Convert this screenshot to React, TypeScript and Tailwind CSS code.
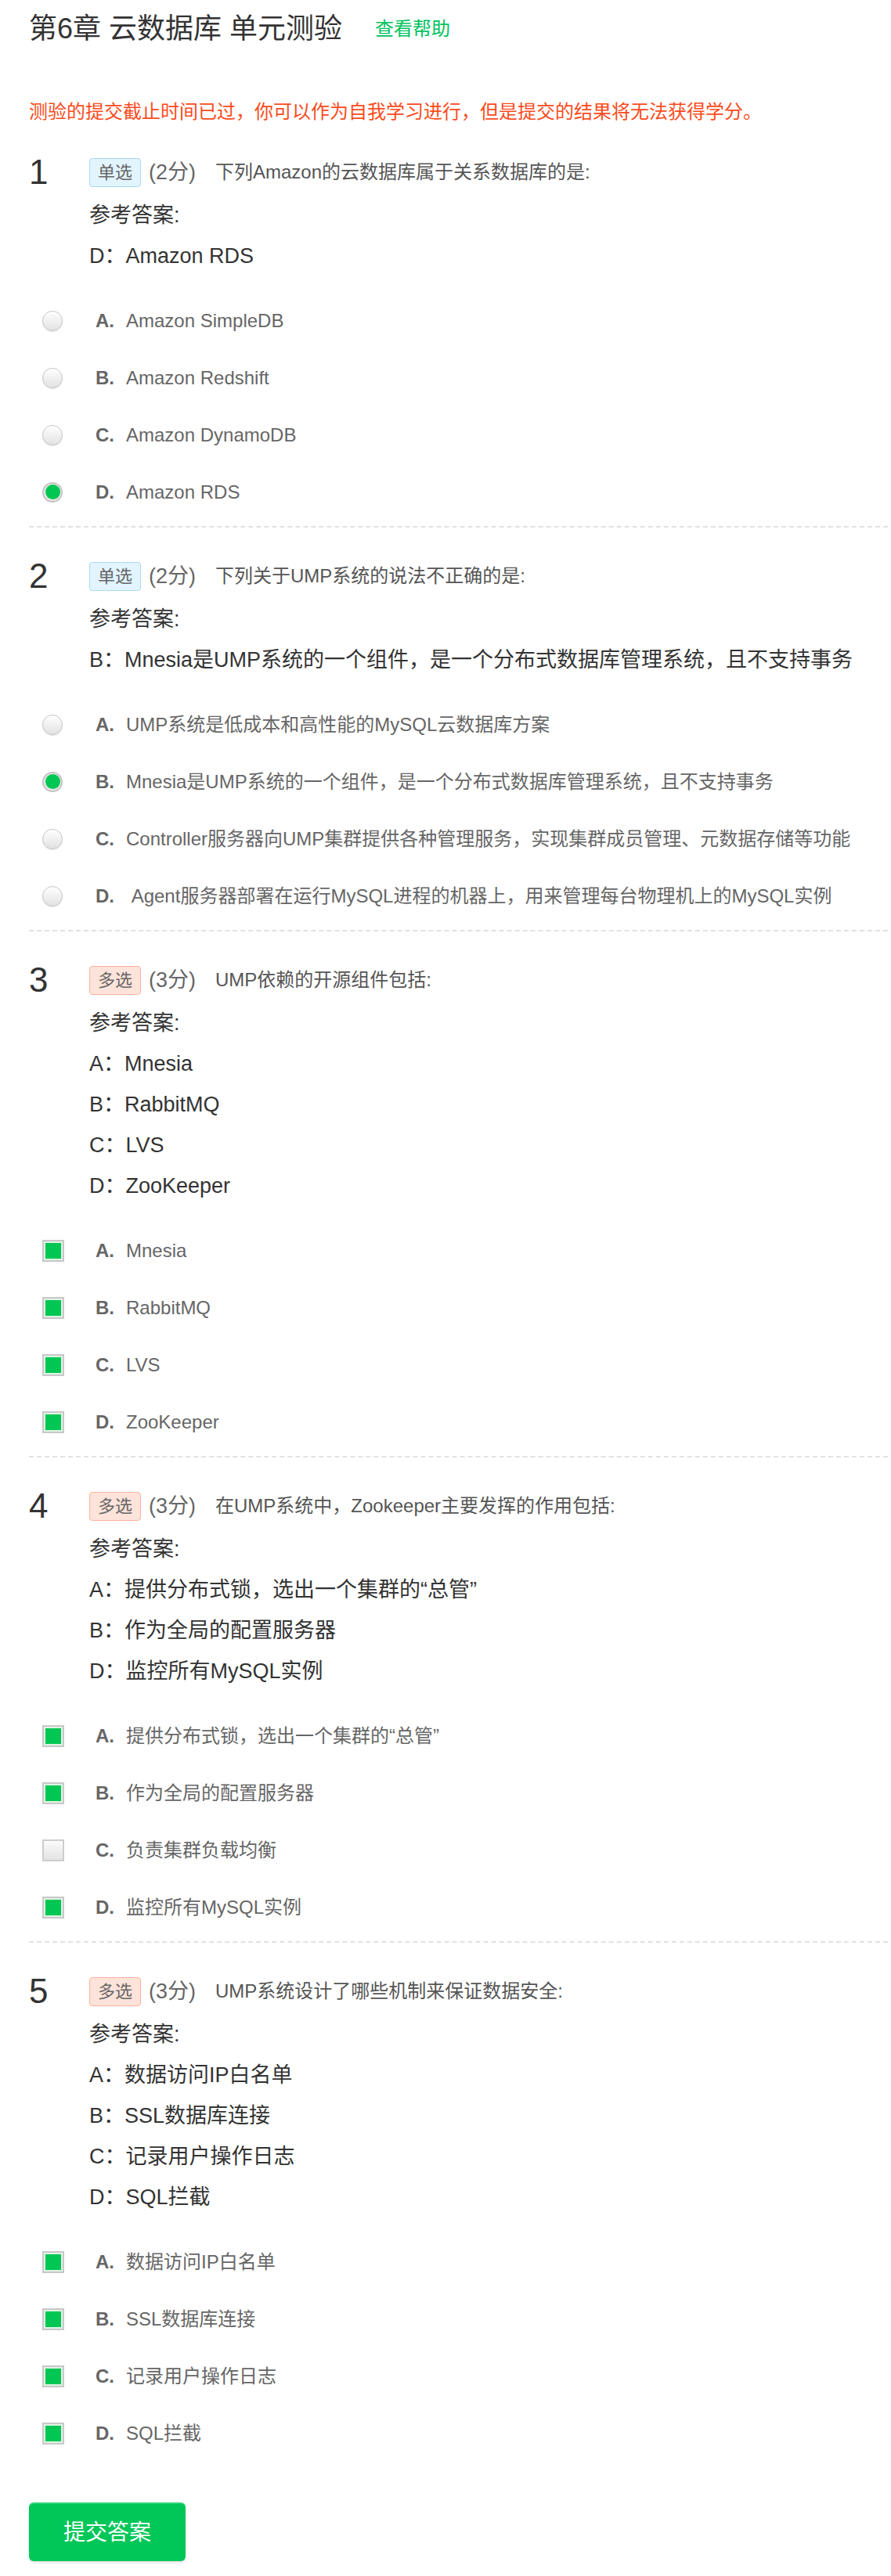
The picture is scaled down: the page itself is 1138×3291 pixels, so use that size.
import React from "react";

type Opt = { key: string; text: string; checked: boolean };
type Question = {
  no: number;
  kind: "单选" | "多选";
  score: string;
  title: string;
  answers: string[];
  options: Opt[];
};

const questions: Question[] = [
  {
    no: 1,
    kind: "单选",
    score: "(2分)",
    title: "下列Amazon的云数据库属于关系数据库的是:",
    answers: ["D：Amazon RDS"],
    options: [
      { key: "A", text: "Amazon SimpleDB", checked: false },
      { key: "B", text: "Amazon Redshift", checked: false },
      { key: "C", text: "Amazon DynamoDB", checked: false },
      { key: "D", text: "Amazon RDS", checked: true },
    ],
  },
  {
    no: 2,
    kind: "单选",
    score: "(2分)",
    title: "下列关于UMP系统的说法不正确的是:",
    answers: ["B：Mnesia是UMP系统的一个组件，是一个分布式数据库管理系统，且不支持事务"],
    options: [
      { key: "A", text: "UMP系统是低成本和高性能的MySQL云数据库方案", checked: false },
      { key: "B", text: "Mnesia是UMP系统的一个组件，是一个分布式数据库管理系统，且不支持事务", checked: true },
      { key: "C", text: "Controller服务器向UMP集群提供各种管理服务，实现集群成员管理、元数据存储等功能", checked: false },
      { key: "D", text: "\u00a0Agent服务器部署在运行MySQL进程的机器上，用来管理每台物理机上的MySQL实例", checked: false },
    ],
  },
  {
    no: 3,
    kind: "多选",
    score: "(3分)",
    title: "UMP依赖的开源组件包括:",
    answers: ["A：Mnesia", "B：RabbitMQ", "C：LVS", "D：ZooKeeper"],
    options: [
      { key: "A", text: "Mnesia", checked: true },
      { key: "B", text: "RabbitMQ", checked: true },
      { key: "C", text: "LVS", checked: true },
      { key: "D", text: "ZooKeeper", checked: true },
    ],
  },
  {
    no: 4,
    kind: "多选",
    score: "(3分)",
    title: "在UMP系统中，Zookeeper主要发挥的作用包括:",
    answers: ["A：提供分布式锁，选出一个集群的“总管”", "B：作为全局的配置服务器", "D：监控所有MySQL实例"],
    options: [
      { key: "A", text: "提供分布式锁，选出一个集群的“总管”", checked: true },
      { key: "B", text: "作为全局的配置服务器", checked: true },
      { key: "C", text: "负责集群负载均衡", checked: false },
      { key: "D", text: "监控所有MySQL实例", checked: true },
    ],
  },
  {
    no: 5,
    kind: "多选",
    score: "(3分)",
    title: "UMP系统设计了哪些机制来保证数据安全:",
    answers: ["A：数据访问IP白名单", "B：SSL数据库连接", "C：记录用户操作日志", "D：SQL拦截"],
    options: [
      { key: "A", text: "数据访问IP白名单", checked: true },
      { key: "B", text: "SSL数据库连接", checked: true },
      { key: "C", text: "记录用户操作日志", checked: true },
      { key: "D", text: "SQL拦截", checked: true },
    ],
  },
];

function Radio({ checked }: { checked: boolean }) {
  if (checked) {
    return (
      <span className="flex h-[26px] w-[26px] items-center justify-center rounded-full border-2 border-[#c4c4c4] bg-[#e9e9e9]">
        <span className="h-[19px] w-[19px] rounded-full bg-[#00c753]" />
      </span>
    );
  }
  return (
    <span className="block h-[26px] w-[26px] rounded-full border border-[#c6c6c6] bg-gradient-to-b from-[#ffffff] to-[#e2e2e2] shadow-[0_1px_1px_rgba(0,0,0,0.12)]" />
  );
}

function Check({ checked }: { checked: boolean }) {
  if (checked) {
    return (
      <span className="flex h-[28px] w-[28px] items-center justify-center border-2 border-[#c8c8c8] bg-[#dff3e3]">
        <span className="h-[20px] w-[20px] bg-[#00c753]" />
      </span>
    );
  }
  return (
    <span className="block h-[28px] w-[28px] border-2 border-[#cdcdcd] bg-gradient-to-b from-[#fbfbfb] to-[#e3e3e3]" />
  );
}

function QuestionBlock({ q, last }: { q: Question; last: boolean }) {
  const multi = q.kind === "多选";
  return (
    <section className={last ? "pt-[40px]" : "border-b-2 border-dashed border-[#e2e2e2] pt-[40px] pb-[7px]"}>
      <div className="flex h-[44px] items-center">
        <span className="w-[77px] text-[44px] leading-none text-[#333]">{q.no}</span>
        <span
          className={
            multi
              ? "rounded-[4px] border border-[#ffb49c] bg-[#fde3da] px-[10px] text-[22px] leading-[35px] text-[#666]"
              : "rounded-[4px] border border-[#a9d9f7] bg-[#e2f4fe] px-[10px] text-[22px] leading-[35px] text-[#666]"
          }
        >
          {q.kind}
        </span>
        <span className="ml-[10px] text-[27px] text-[#666]">{q.score}</span>
        <span className="ml-[25px] text-[24px] text-[#555]">{q.title}</span>
      </div>

      <div className="ml-[77px] mt-[7px] text-[27px] leading-[52px] text-[#333]">
        <div>参考答案:</div>
        {q.answers.map((a) => (
          <div key={a}>{a}</div>
        ))}
      </div>

      <ul className="mt-[20px]">
        {q.options.map((o) => (
          <li key={o.key} className="flex h-[73px] items-center">
            <span className="ml-[17px] flex w-[68px] items-center">
              {multi ? <Check checked={o.checked} /> : <Radio checked={o.checked} />}
            </span>
            <span className="w-[39px] text-[24px] font-bold text-[#666]">{o.key}.</span>
            <span className="text-[24px] text-[#666]">{o.text}</span>
          </li>
        ))}
      </ul>
    </section>
  );
}

export default function App() {
  return (
    <main className="min-h-screen bg-white pl-[37px] pr-[4px] pb-[20px] font-[family-name:Liberation_Sans,Noto_Sans_CJK_SC,sans-serif]">
      <header className="mt-[15px] flex h-[44px] items-center">
        <h1 className="text-[36px] font-normal text-[#333]">第6章 云数据库 单元测验</h1>
        <a className="ml-[42px] text-[24px] text-[#00c15d]">查看帮助</a>
      </header>

      <p className="mt-[69px] text-[24px] leading-[30px] text-[#fd4b1c]">
        测验的提交截止时间已过，你可以作为自我学习进行，但是提交的结果将无法获得学分。
      </p>

      {questions.map((q, i) => (
        <QuestionBlock key={q.no} q={q} last={i === questions.length - 1} />
      ))}

      <button className="mt-[52px] h-[75px] w-[200px] rounded-[6px] border-t-2 border-[#2fd478] bg-[#00c758] text-[28px] text-white shadow-[0_2px_3px_rgba(0,0,0,0.12)]">
        提交答案
      </button>
    </main>
  );
}
